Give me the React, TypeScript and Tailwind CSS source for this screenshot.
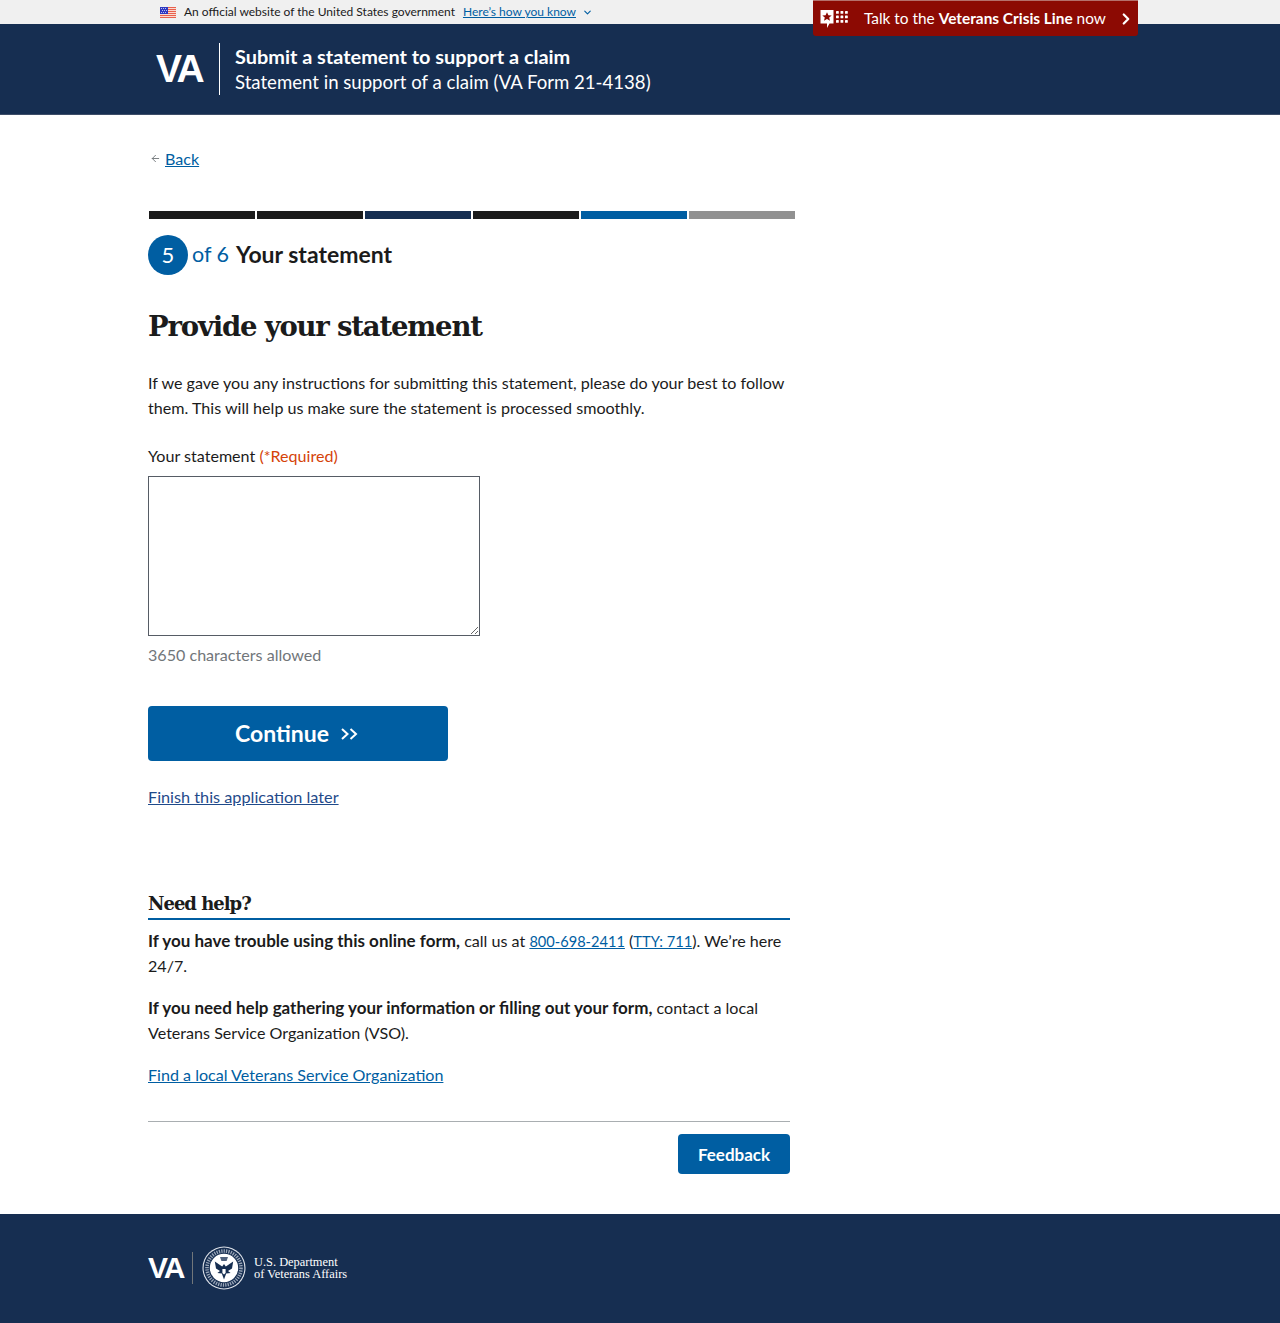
import { ChevronDown, ChevronRight, ArrowLeft } from 'lucide-react'

const serif = "font-['DejaVu_Serif',serif]"

function Flag() {
  return (
    <svg width="16" height="11" viewBox="0 0 16 11" aria-hidden="true">
      <rect width="16" height="11" fill="#f9d9d0" />
      <rect y="0" width="16" height="1" fill="#e8604c" />
      <rect y="2" width="16" height="1" fill="#e8604c" />
      <rect y="4" width="16" height="1" fill="#e8604c" />
      <rect y="6" width="16" height="1" fill="#e8604c" />
      <rect y="8" width="16" height="1" fill="#e8604c" />
      <rect y="10" width="16" height="1" fill="#e8604c" />
      <rect width="8" height="7" fill="#2e38c0" />
      <path d="M1 1.5h1M3 1.5h1M5 1.5h1M2 3.5h1M4 3.5h1M6 3.5h1M1 5.5h1M3 5.5h1M5 5.5h1" stroke="#c9cdf5" strokeWidth="0.9" />
    </svg>
  )
}

function CrisisIcon() {
  return (
    <svg width="29" height="18" viewBox="0 0 29 18" aria-hidden="true">
      <path d="M0.5 0h13v13.5H9.5L7 18v-4.5H0.5z" fill="#fff" />
      <path d="M7 2.2l1.4 3 3.3.3-2.5 2.1.8 3.2L7 9.1l-3 1.7.8-3.2-2.5-2.1 3.3-.3z" fill="#8c0a03" />
      <g fill="#fff">
        <rect x="16" y="1" width="2.8" height="2.8" rx="0.6" />
        <rect x="20.5" y="1" width="2.8" height="2.8" rx="0.6" />
        <rect x="25" y="1" width="2.8" height="2.8" rx="0.6" />
        <rect x="16" y="5.5" width="2.8" height="2.8" rx="0.6" />
        <rect x="20.5" y="5.5" width="2.8" height="2.8" rx="0.6" />
        <rect x="25" y="5.5" width="2.8" height="2.8" rx="0.6" />
        <rect x="16" y="10" width="2.8" height="2.8" rx="0.6" />
        <rect x="20.5" y="10" width="2.8" height="2.8" rx="0.6" />
        <rect x="25" y="10" width="2.8" height="2.8" rx="0.6" />
      </g>
    </svg>
  )
}

function Seal() {
  return (
    <svg width="44" height="44" viewBox="0 0 44 44" aria-hidden="true">
      <circle cx="22" cy="22" r="21.5" fill="#dfe3ea" />
      <circle cx="22" cy="22" r="20.4" fill="#162e51" />
      <circle cx="22" cy="22" r="17" fill="none" stroke="#9aa6b8" strokeWidth="3.6" strokeDasharray="1.3 1.1" />
      <circle cx="22" cy="22" r="14.2" fill="#fff" />
      {/* eagle */}
      <path d="M22 18l1.8 2.6 7.4-5-1.2 7-4 2.4 2.6 2-4.4.6-2.2 6-2.2-6-4.4-.6 2.6-2-4-2.4-1.2-7 7.4 5z" fill="#162e51" />
      <path d="M18 11h8l-1.4 4h-5.2z" fill="#162e51" opacity="0.75" />
      <path d="M20.4 23h3.2v4l-1.6 1.6-1.6-1.6z" fill="#fff" />
    </svg>
  )
}

const segments = ['bg-[#1b1b1b]', 'bg-[#1b1b1b]', 'bg-[#162e51]', 'bg-[#1b1b1b]', 'bg-[#005ea2]', 'bg-[#919191]']

export default function App() {
  return (
    <div className="relative min-h-[1323px] bg-white font-['Lato',sans-serif] text-[16.1px] leading-[25px] text-[#1b1b1b]">
      {/* gov banner */}
      <div className="h-6 bg-[#f0f0f0] pl-[160px] flex items-center text-[12px] leading-6">
        <Flag />
        <span className="ml-2">An official website of the United States government</span>
        <a className="ml-2 text-[#005ea2] underline">Here’s how you know</a>
        <ChevronDown className="ml-1.5 text-[#005ea2]" size={11} strokeWidth={2.5} />
      </div>

      {/* crisis line */}
      <div className="absolute top-0 left-[813px] w-[325px] h-[36px] bg-[#8c0a03] border-t border-[#b5706c] rounded-b-[3px] flex items-center pl-[7px] text-white text-[15.4px]">
        <CrisisIcon />
        <span className="ml-[15px]">
          Talk to the <strong className="font-bold">Veterans Crisis Line</strong> now
        </span>
        <ChevronRight className="ml-auto mr-[3px]" size={18} strokeWidth={3} />
      </div>

      {/* header */}
      <header className="h-[91px] bg-[#162e51] border-b border-[#3d4d68] pl-[156px] flex items-center text-white">
        <span className="w-[48px] mb-[2px] font-['Liberation_Sans',sans-serif] font-bold text-[39px] leading-none tracking-[-2.6px]">VA</span>
        <div className="ml-[15px] h-[52px] w-px bg-white" />
        <div className="ml-[15px]">
          <div className="text-[19.9px] leading-[26px] font-bold">Submit a statement to support a claim</div>
          <div className="text-[18.6px] leading-[26px]">Statement in support of a claim (VA Form 21-4138)</div>
        </div>
      </header>

      <main className="pl-[148px] w-[795px] box-content">
        <div className="mt-[31px] flex items-center h-[25px]">
          <ArrowLeft className="ml-[2px] text-[#71767a]" size={11} strokeWidth={2} />
          <a className="ml-[4px] text-[#005ea2] underline">Back</a>
        </div>

        <div className="mt-[40px] ml-px flex gap-[2px]">
          {segments.map((c, i) => (
            <div key={i} className={`h-2 w-[106px] ${c}`} />
          ))}
        </div>

        <div className="mt-[16px] flex items-center">
          <div className="w-10 h-10 pb-[2px] rounded-full bg-[#005ea2] text-white text-[22px] flex items-center justify-center">5</div>
          <span className="ml-1 mb-[2px] text-[21.5px] text-[#005ea2]">of 6</span>
          <span className="ml-[7px] mb-[2px] text-[23px] font-bold">Your statement</span>
        </div>

        <h1 className={`${serif} mt-[32px] text-[27.5px] leading-[38px] font-bold tracking-[-1.2px]`}>Provide your statement</h1>

        <p className="mt-[25px] w-[642px]">
          If we gave you any instructions for submitting this statement, please do your best to follow them. This will help us make sure the statement is processed smoothly.
        </p>

        <div className="mt-[23px]">
          Your statement <span className="text-[#d54309]">(*Required)</span>
        </div>
        <textarea className="mt-[8px] block w-[332px] h-[160px] border border-[#565c65] bg-white" />
        <div className="mt-[6px] text-[#71767a]">3650 characters allowed</div>

        <button className="mt-[39px] w-[300px] h-[55px] pr-[3px] rounded-[4px] bg-[#005ea2] text-white text-[23px] font-bold flex items-center justify-center">
          Continue
          <svg className="ml-[12px]" width="17" height="12" viewBox="0 0 17 12" fill="none" stroke="currentColor" strokeWidth="2" aria-hidden="true">
            <path d="M1 1l5.5 5-5.5 5M9.5 1l5.5 5-5.5 5" />
          </svg>
        </button>

        <a className="mt-[23px] block text-[16.25px] text-[#1f4a8a] underline">Finish this application later</a>

        <div className="w-[642px]">
          <h2 className={`${serif} mt-[82px] pb-[1px] text-[18px] leading-[26px] font-bold tracking-[-1px] border-b-2 border-[#005ea2]`}>Need help?</h2>
          <p className="mt-[8px]">
            <strong className="font-bold text-[17px] leading-none">If you have trouble using this online form,</strong> call us at{' '}
            <a className="text-[14.6px] leading-none text-[#005ea2] underline">800-698-2411</a> (<a className="text-[14.7px] leading-none text-[#005ea2] underline">TTY: 711</a>). We’re here 24/7.
          </p>
          <p className="mt-[17px]">
            <strong className="font-bold text-[17px] leading-none">If you need help gathering your information or filling out your form,</strong> contact a local Veterans Service Organization (VSO).
          </p>
          <a className="mt-[17px] block text-[#005ea2] underline">Find a local Veterans Service Organization</a>
          <div className="mt-[34px] border-t border-[#a9aeb1]" />
          <div className="mt-[12px] flex justify-end">
            <button className="w-[112px] h-10 rounded-[4px] bg-[#005ea2] text-white text-[17px] font-bold">Feedback</button>
          </div>
        </div>
      </main>

      {/* footer */}
      <footer className="mt-[40px] h-[109px] pb-[2px] bg-[#162e51] pl-[148px] flex items-center text-white">
        <span className="w-[36px] font-['Liberation_Sans',sans-serif] font-bold text-[30px] leading-none tracking-[-2px]">VA</span>
        <div className="ml-[8px] h-8 w-px bg-[#71767a]" />
        <div className="ml-[9px]"><Seal /></div>
        <div className="ml-[8px] font-['Liberation_Serif',serif] text-[12.4px] leading-[12px]">
          U.S. Department
          <br />
          of Veterans Affairs
        </div>
      </footer>
    </div>
  )
}
